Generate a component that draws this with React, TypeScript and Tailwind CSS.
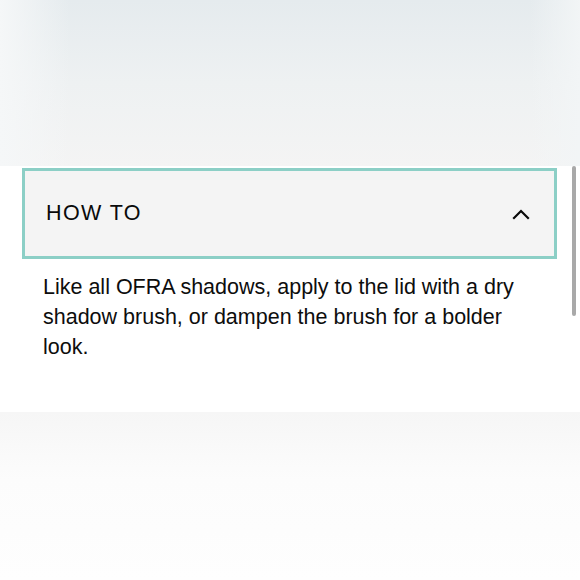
import React from "react";

export default function App() {
  return (
    <div
      className="relative w-[580px] h-[580px] overflow-hidden bg-white"
      style={{ fontFamily: '"Liberation Sans", Arial, sans-serif' }}
    >
      {/* top image area */}
      <div className="relative h-[166px] bg-gradient-to-b from-[#e5ebee] via-[#eef1f2] to-[#f4f4f4]">
        <div className="absolute inset-y-0 left-0 w-[70px] bg-gradient-to-r from-[#f5f7f8] to-transparent" />
        <div className="absolute inset-y-0 right-0 w-[50px] bg-gradient-to-l from-[#f2f5f6] to-transparent" />
      </div>

      {/* content */}
      <div className="h-[246px] px-[22px] pt-[2px]">
        <div className="w-[535px] h-[91px] border-[3px] border-[#8ccfc6] bg-[#f4f4f4] flex items-center justify-between pl-[21px] pr-[24px]">
          <span className="text-[21.5px] tracking-[1.4px] text-[#0a0a0a] leading-none">HOW TO</span>
          <svg width="18" height="12" viewBox="0 0 18 12" fill="none">
            <path d="M2 10 L9 3 L16 10" stroke="#0a0a0a" strokeWidth="2.2" strokeLinecap="square" />
          </svg>
        </div>
        <p className="mt-[13px] pl-[21px] w-[510px] text-[21.5px] leading-[30px] text-[#0d0d0d]">
          Like all OFRA shadows, apply to the lid with a dry shadow brush, or dampen the brush for a bolder look.
        </p>
      </div>

      {/* bottom image area */}
      <div className="h-[168px] bg-gradient-to-b from-[#f6f6f6] via-[#fcfcfc] via-40% to-[#fefefe]" />

      {/* scrollbar */}
      <div className="absolute left-[572px] top-[166px] w-[4px] h-[150px] rounded-full bg-[#a9a9a9]" />
    </div>
  );
}
